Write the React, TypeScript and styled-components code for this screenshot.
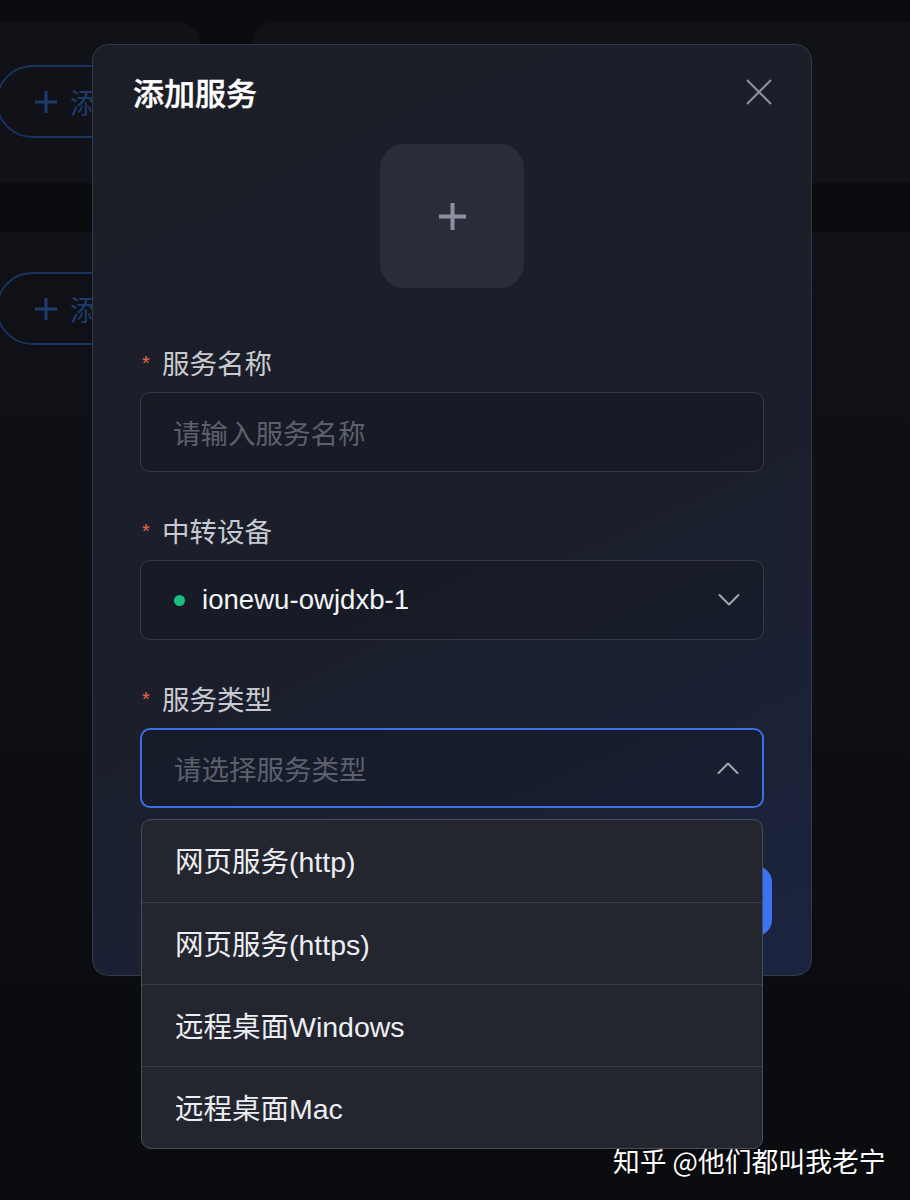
import React from "react";
import styled, { createGlobalStyle } from "styled-components";

const GlobalStyle = createGlobalStyle`
  html, body { margin: 0; padding: 0; background: #0b0c10; }
  body { font-family: "Liberation Sans", "Noto Sans CJK SC", sans-serif; }
  * { box-sizing: border-box; }
`;

const FONT = `"Liberation Sans", "Noto Sans CJK SC", sans-serif`;

const Screen = styled.div`
  position: relative;
  width: 910px;
  height: 1200px;
  overflow: hidden;
  background: #0b0c10;
  font-family: ${FONT};
`;

/* ---------- dimmed page behind the modal ---------- */
const Backdrop = styled.div`
  display: flex;
  flex-direction: column;
  padding-top: 22px;
`;

const CardRow = styled.div<{ $h: number }>`
  display: flex;
  gap: 52px;
  height: ${(p) => p.$h}px;
`;

const BgCard = styled.div<{ $w?: number; $flex?: boolean }>`
  background: #111217;
  ${(p) => (p.$flex ? "flex: 1;" : `width: ${p.$w}px;`)}
  border-radius: ${(p) => (p.$flex ? "22px 0 0 22px" : "0 22px 22px 0")};
  padding-top: 43px;
`;

const Band = styled.div<{ $h: number }>`
  height: ${(p) => p.$h}px;
`;

const SecondCard = styled.div`
  background: linear-gradient(180deg, #101116 0%, #0f1015 35%, #0b0c10 80%);
  height: 968px;
  padding-top: 40px;
`;

const GhostPill = styled.div`
  display: flex;
  align-items: center;
  gap: 12px;
  width: 200px;
  height: 73px;
  margin-left: -4px;
  padding-left: 36px;
  border: 2px solid #1b3360;
  border-radius: 40px;
  color: #1f3b6c;
  font-size: 28px;
  font-family: "Noto Sans CJK SC", sans-serif;
`;

/* ---------- modal ---------- */
const Modal = styled.div`
  position: absolute;
  left: 92px;
  top: 44px;
  width: 720px;
  display: flex;
  flex-direction: column;
  padding: 29px 47px 39px 47px;
  border: 1px solid #343947;
  border-radius: 16px;
  background: linear-gradient(155deg, #1c1e27 0%, #1b1f2b 55%, #1b2440 100%);
`;

const Header = styled.div`
  display: flex;
  align-items: center;
  justify-content: space-between;
  height: 36px;
  margin-left: -7px;
  margin-right: -8px;
`;

const Title = styled.h2`
  margin: 0;
  font-size: 31px;
  line-height: 36px;
  font-weight: 500;
  color: #ffffff;
  font-family: "Noto Sans CJK SC", sans-serif;
  -webkit-text-stroke: 0.4px #ffffff;
`;

const CloseButton = styled.button`
  display: flex;
  padding: 0;
  border: none;
  background: none;
`;

const Uploader = styled.div`
  align-self: center;
  width: 144px;
  height: 144px;
  margin-top: 34px;
  border-radius: 24px;
  background: #2a2c38;
  display: flex;
  align-items: center;
  justify-content: center;
`;

const Form = styled.div`
  display: flex;
  flex-direction: column;
  gap: 38px;
  margin-top: 54px;
`;

const Field = styled.div`
  position: relative;
  display: flex;
  flex-direction: column;
  gap: 10px;
`;

const Label = styled.div`
  display: flex;
  align-items: center;
  height: 40px;
  font-size: 27.5px;
  color: #c8cad1;
  font-family: "Noto Sans CJK SC", sans-serif;
`;

const Star = styled.span`
  width: 22px;
  padding-left: 2px;
  color: #e8664f;
  font-size: 20px;
  font-family: "Liberation Sans", sans-serif;
  align-self: flex-start;
  margin-top: 10px;
`;

const Control = styled.div<{ $focused?: boolean }>`
  display: flex;
  align-items: center;
  height: 80px;
  padding: 0 23px 0 32px;
  border: ${(p) => (p.$focused ? "2px solid #3d6fe3" : "1.5px solid #363a47")};
  border-radius: 10px;
  background: ${(p) => (p.$focused ? "rgba(18, 22, 36, 0.35)" : "rgba(18, 19, 26, 0.3)")};
`;

const Placeholder = styled.span`
  flex: 1;
  font-size: 27.5px;
  color: #5c606d;
  font-family: "Noto Sans CJK SC", sans-serif;
`;

const Value = styled.span`
  flex: 1;
  font-size: 27.6px;
  color: #f2f3f5;
`;

const Dot = styled.span`
  width: 11px;
  height: 11px;
  border-radius: 50%;
  background: #19c084;
  margin-left: 1px;
  margin-right: 17px;
`;

const Footer = styled.div`
  display: flex;
  justify-content: flex-end;
  gap: 20px;
  margin-top: 58px;
  margin-right: -8px;
`;

const Button = styled.button<{ $primary?: boolean }>`
  width: 300px;
  height: 70px;
  border: none;
  border-radius: 16px;
  font-size: 27px;
  font-family: "Noto Sans CJK SC", sans-serif;
  color: #fff;
  background: ${(p) => (p.$primary ? "#3b73f0" : "#2c2f3b")};
`;

const Menu = styled.ul`
  position: absolute;
  left: 1px;
  right: 1px;
  top: calc(100% + 11px);
  margin: 0;
  padding: 0;
  list-style: none;
  border: 1.5px solid #4a4e5a;
  border-radius: 10px;
  background: #24262f;
  overflow: hidden;
  z-index: 5;
`;

const MenuItem = styled.li`
  display: flex;
  align-items: center;
  height: 82px;
  padding-left: 33px;
  padding-bottom: 3px;
  font-size: 28.5px;
  color: #eceef2;
  font-family: "Liberation Sans", "Noto Sans CJK SC", sans-serif;
  & + & {
    border-top: 1.5px solid #3a3d48;
  }
`;

const Watermark = styled.div`
  position: absolute;
  left: 613px;
  top: 1144px;
  font-size: 26.8px;
  line-height: 34px;
  color: #ffffff;
  font-family: "Noto Sans CJK SC", sans-serif;
  text-shadow: 0 0 2px rgba(0, 0, 0, 0.6);
`;

const Chevron = ({ up }: { up?: boolean }) => (
  <svg width="22" height="14" viewBox="0 0 22 14" fill="none">
    <path
      d={up ? "M1.5 12 L11 2.5 L20.5 12" : "M1.5 2 L11 11.5 L20.5 2"}
      stroke="#a2a7b3"
      strokeWidth="2"
      strokeLinecap="round"
      strokeLinejoin="round"
    />
  </svg>
);

const Plus = ({ size, color, w }: { size: number; color: string; w: number }) => (
  <svg width={size} height={size} viewBox={`0 0 ${size} ${size}`} fill="none">
    <path
      d={`M${size / 2} 1 V${size - 1} M1 ${size / 2} H${size - 1}`}
      stroke={color}
      strokeWidth={w}
    />
  </svg>
);

export default function App() {
  return (
    <Screen>
      <GlobalStyle />
      <Backdrop>
        <CardRow $h={161}>
          <BgCard $w={200}>
            <GhostPill>
              <Plus size={24} color="#1f3b6c" w={3} />
              <span>添加</span>
            </GhostPill>
          </BgCard>
          <BgCard $flex />
        </CardRow>
        <Band $h={49} />
        <SecondCard>
          <GhostPill>
            <Plus size={24} color="#1f3b6c" w={3} />
            <span>添加</span>
          </GhostPill>
        </SecondCard>
      </Backdrop>

      <Modal>
        <Header>
          <Title>添加服务</Title>
          <CloseButton aria-label="关闭">
            <svg width="26" height="26" viewBox="0 0 26 26" fill="none">
              <path d="M1 1 L25 25 M25 1 L1 25" stroke="#8c909c" strokeWidth="2.2" />
            </svg>
          </CloseButton>
        </Header>

        <Uploader>
          <Plus size={29} color="#8a90a1" w={4} />
        </Uploader>

        <Form>
          <Field>
            <Label>
              <Star>*</Star>服务名称
            </Label>
            <Control>
              <Placeholder>请输入服务名称</Placeholder>
            </Control>
          </Field>

          <Field>
            <Label>
              <Star>*</Star>中转设备
            </Label>
            <Control>
              <Dot />
              <Value>ionewu-owjdxb-1</Value>
              <Chevron />
            </Control>
          </Field>

          <Field>
            <Label>
              <Star>*</Star>服务类型
            </Label>
            <Control $focused>
              <Placeholder>请选择服务类型</Placeholder>
              <Chevron up />
            </Control>
            <Menu>
              <MenuItem>网页服务(http)</MenuItem>
              <MenuItem>网页服务(https)</MenuItem>
              <MenuItem>远程桌面Windows</MenuItem>
              <MenuItem>远程桌面Mac</MenuItem>
            </Menu>
          </Field>
        </Form>

        <Footer>
          <Button>取消</Button>
          <Button $primary>确定</Button>
        </Footer>
      </Modal>

      <Watermark>知乎 @他们都叫我老宁</Watermark>
    </Screen>
  );
}
